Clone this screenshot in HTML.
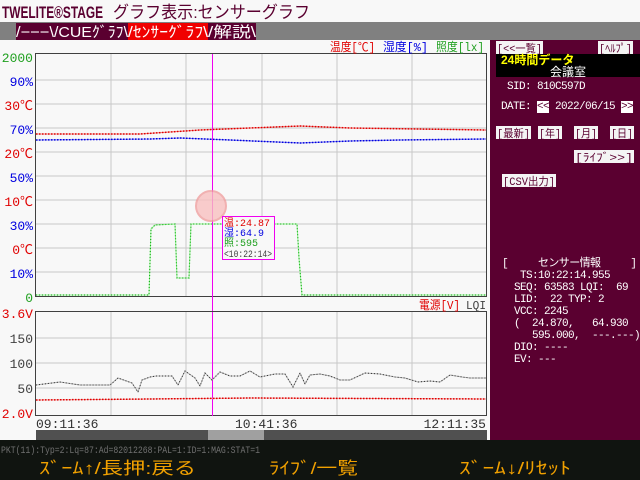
<!DOCTYPE html>
<html><head><meta charset="utf-8"><style>
*{margin:0;padding:0;box-sizing:border-box}
body{width:640px;height:480px;overflow:hidden;background:#f8f8f8;position:relative;font-family:"Liberation Mono","Noto Sans CJK JP",monospace;}
.a{position:absolute;white-space:pre;line-height:1}
</style></head><body>
<div class="a" style="left:0;top:22px;width:640px;height:18px;background:#808080"></div>
<div class="a" style="left:16px;top:23px;height:17px;width:112px;background:#5a0030"></div>
<div class="a" style="left:128px;top:23px;height:17px;width:80px;background:#f00000"></div>
<div class="a" style="left:208px;top:23px;height:17px;width:48px;background:#5a0030"></div>
<div class="a" style="left:490px;top:40px;width:150px;height:400px;background:#5a0030"></div>

<svg class="a" style="left:0;top:0" width="640" height="40" font-family="Liberation Sans,Noto Sans CJK JP,sans-serif">
<text x="2" y="18" font-size="17" font-weight="bold" fill="#5a0030" textLength="101" lengthAdjust="spacingAndGlyphs">TWELITE®STAGE</text>
<text x="113" y="18" font-size="17" fill="#5a0030" textLength="197" lengthAdjust="spacingAndGlyphs">グラフ表示:センサーグラフ</text>
<g fill="#fff" font-size="15">
<text x="16" y="37" textLength="38" lengthAdjust="spacingAndGlyphs">/−−−\</text>
<text x="54" y="37" textLength="74" lengthAdjust="spacingAndGlyphs">/CUEｸﾞﾗﾌ\</text>
<text x="128" y="37" textLength="80" lengthAdjust="spacingAndGlyphs">/ｾﾝｻｰｸﾞﾗﾌ\</text>
<text x="208" y="37" textLength="48" lengthAdjust="spacingAndGlyphs">/解説\</text>
</g>
</svg>

<svg class="a" style="left:0;top:0" width="490" height="440" font-family="Liberation Mono,Noto Sans CJK JP,monospace" font-size="12">
<rect x="35.5" y="53.5" width="451" height="243" fill="#f8f8f8" stroke="#404040"/>
<g stroke="#c8c8c8">
<path d="M36 80H486M36 104H486M36 128H486M36 152H486M36 176H486M36 200H486M36 224H486M36 248H486M36 272H486"/>
<path d="M111 54V296M186 54V296M262 54V296M337 54V296M412 54V296"/>
</g>
<g text-anchor="end" font-size="13">
<text x="33" y="62" fill="#20a020">2000</text>
<text x="33" y="86" fill="#0000e0">90%</text>
<text x="33" y="110" fill="#e00000">30℃</text>
<text x="33" y="134" fill="#0000e0">70%</text>
<text x="33" y="158" fill="#e00000">20℃</text>
<text x="33" y="182" fill="#0000e0">50%</text>
<text x="33" y="206" fill="#e00000">10℃</text>
<text x="33" y="230" fill="#0000e0">30%</text>
<text x="33" y="254" fill="#e00000">0℃</text>
<text x="33" y="278" fill="#0000e0">10%</text>
<text x="33" y="302" fill="#20a020">0</text>
</g>
<text x="330" y="51" font-size="12" fill="#e00000" textLength="45" lengthAdjust="spacingAndGlyphs">温度[℃]</text>
<text x="383" y="51" font-size="12" fill="#0000e0" textLength="45" lengthAdjust="spacingAndGlyphs">湿度[%]</text>
<text x="436" y="51" font-size="12" fill="#20a020" textLength="48" lengthAdjust="spacingAndGlyphs">照度[lx]</text>
<polyline fill="none" stroke="#f08080" points="36,134 140,134 200,130 250,128 300,126 350,128 486,130"/>
<polyline fill="none" stroke="#e00000" stroke-dasharray="1.5 1.5" stroke-width="1.5" points="36,134 140,134 200,130 250,128 300,126 350,128 486,130"/>
<polyline fill="none" stroke="#8080f0" points="36,140 150,139 180,138 230,140 300,143 350,141 400,140 486,139"/>
<polyline fill="none" stroke="#0000e0" stroke-dasharray="1.5 1.5" stroke-width="1.5" points="36,140 150,139 180,138 230,140 300,143 350,141 400,140 486,139"/>
<polyline fill="none" stroke="#90f090" points="36,295 149,295 151,229 155,225 175,224 177,278 189,278 191,224 297,224 299,258 302,295 486,295"/>
<polyline fill="none" stroke="#20b020" stroke-dasharray="1 2" stroke-width="1.2" points="36,295 149,295 151,229 155,225 175,224 177,278 189,278 191,224 297,224 299,258 302,295 486,295"/>
<line x1="212.5" y1="54" x2="212.5" y2="416" stroke="#f000f0"/>
<circle cx="211" cy="206" r="15" fill="#f8c0c0" stroke="#f0a0a0" stroke-width="2" opacity="0.8"/>
<rect x="222.5" y="216.5" width="52" height="43" fill="#f8f8f8" stroke="#f000f0"/>
<g font-size="10">
<text x="224" y="226" fill="#e00000">温:24.87</text>
<text x="224" y="236" fill="#0000e0">湿:64.9</text>
<text x="224" y="246" fill="#20a020">照:595</text>
<text x="224" y="257" fill="#404040" textLength="48" lengthAdjust="spacingAndGlyphs">&lt;10:22:14&gt;</text>
</g>
<rect x="35.5" y="311.5" width="451" height="104" fill="#f8f8f8" stroke="#404040"/>
<g stroke="#c8c8c8">
<path d="M36 338H486M36 363H486M36 388H486M111 312V415M186 312V415M262 312V415M337 312V415M412 312V415"/>
</g>
<line x1="212.5" y1="312" x2="212.5" y2="416" stroke="#f000f0"/>
<text x="419" y="309" font-size="12" fill="#e00000" textLength="41" lengthAdjust="spacingAndGlyphs">電源[V]</text>
<text x="466" y="309" font-size="12" fill="#404040" textLength="20" lengthAdjust="spacingAndGlyphs">LQI</text>
<g text-anchor="end" font-size="13">
<text x="33" y="318" fill="#e00000">3.6V</text>
<text x="33" y="343" fill="#404040">150</text>
<text x="33" y="368" fill="#404040">100</text>
<text x="33" y="393" fill="#404040">50</text>
<text x="33" y="418" fill="#e00000">2.0V</text>
</g>
<polyline fill="none" stroke="#b0b0b0" points="36,385 60,382 80,385 110,385 118,378 132,383 138,392 142,380 150,377 156,376 172,376 178,385 185,371 195,378 200,386 205,373 212,380 220,372 230,376 240,376 250,371 260,377 275,374 285,374 293,387 300,373 305,384 310,375 320,374 330,376 340,380 350,380 365,373 380,374 395,377 405,378 418,382 430,381 440,382 450,375 462,377 470,378 486,378"/>
<polyline fill="none" stroke="#303030" stroke-dasharray="1 2" points="36,385 60,382 80,385 110,385 118,378 132,383 138,392 142,380 150,377 156,376 172,376 178,385 185,371 195,378 200,386 205,373 212,380 220,372 230,376 240,376 250,371 260,377 275,374 285,374 293,387 300,373 305,384 310,375 320,374 330,376 340,380 350,380 365,373 380,374 395,377 405,378 418,382 430,381 440,382 450,375 462,377 470,378 486,378"/>
<polyline fill="none" stroke="#f09090" points="36,400 150,399 250,398 486,399"/>
<polyline fill="none" stroke="#e00000" stroke-dasharray="1.5 1.5" stroke-width="1.5" points="36,400 150,399 250,398 486,399"/>
<g font-size="13" fill="#303030">
<text x="36" y="428">09:11:36</text>
<text x="235" y="428">10:41:36</text>
<text x="486" y="428" text-anchor="end">12:11:35</text>
</g>
<rect x="36" y="430" width="451" height="10" fill="#505050"/>
<rect x="208" y="430" width="56" height="10" fill="#a0a0a0"/>
</svg>

<svg class="a" style="left:490px;top:40px" width="150" height="160" font-family="Liberation Mono,Noto Sans CJK JP,monospace" font-size="11">
<g fill="#f4f4f4">
<rect x="6" y="1" width="47" height="13"/>
<rect x="108" y="1" width="35" height="13"/>
<rect x="6" y="86" width="35" height="13"/>
<rect x="48" y="86" width="24" height="13"/>
<rect x="84" y="86" width="24" height="13"/>
<rect x="120" y="86" width="24" height="13"/>
<rect x="84" y="110" width="60" height="13"/>
<rect x="12" y="134" width="54" height="13"/>
</g>
<g fill="#5a0030">
<text x="7" y="12" textLength="45" lengthAdjust="spacingAndGlyphs">[&lt;&lt;一覧]</text>
<text x="109" y="12" textLength="33" lengthAdjust="spacingAndGlyphs">[ﾍﾙﾌﾟ]</text>
<text x="7" y="97" textLength="33" lengthAdjust="spacingAndGlyphs">[最新]</text>
<text x="49" y="97" textLength="22" lengthAdjust="spacingAndGlyphs">[年]</text>
<text x="85" y="97" textLength="22" lengthAdjust="spacingAndGlyphs">[月]</text>
<text x="121" y="97" textLength="22" lengthAdjust="spacingAndGlyphs">[日]</text>
<text x="85" y="121" textLength="58" lengthAdjust="spacingAndGlyphs">[ﾗｲﾌﾞ&gt;&gt;]</text>
<text x="13" y="145" textLength="52" lengthAdjust="spacingAndGlyphs">[CSV出力]</text>
</g>
</svg>
<div class="a" style="left:496px;top:54px;width:144px;height:23px;background:#000"></div>
<div class="a" style="left:501px;top:54px;font-size:12px;color:#ffff00;font-weight:bold;font-family:'Liberation Sans','Noto Sans CJK JP',sans-serif">24時間データ</div>
<div class="a" style="left:550px;top:66px;font-size:12px;color:#fff;font-family:'Liberation Sans','Noto Sans CJK JP',sans-serif">会議室</div>
<div class="a" style="left:507px;top:82px;font-size:11px;letter-spacing:-0.6px;color:#fff">SID: 810C597D</div>
<div class="a" style="left:501px;top:102px;font-size:11px;letter-spacing:-0.6px;color:#fff">DATE: <span style="background:#fff;color:#5a0030">&lt;&lt;</span> 2022/06/15 <span style="background:#fff;color:#5a0030">&gt;&gt;</span></div>
<div class="a" style="left:502px;top:258px;font-size:11px;letter-spacing:-0.6px;color:#fff;line-height:12px">[     センサー情報     ]
   TS:10:22:14.955
  SEQ: 63583 LQI:  69
  LID:  22 TYP: 2
  VCC: 2245
  (  24.870,   64.930
     595.000,  ---.---)
  DIO: ----
  EV: ---</div>

<div class="a" style="left:0;top:440px;width:640px;height:40px;background:#101410"></div>
<svg class="a" style="left:0;top:440px" width="640" height="40" font-family="Liberation Sans,Noto Sans CJK JP,sans-serif" font-size="17" fill="#f0a000">
<text x="1" y="13" font-size="10" fill="#707070" font-family="Liberation Mono,monospace" textLength="259" lengthAdjust="spacingAndGlyphs">PKT(11):Typ=2:Lq=87:Ad=82012268:PAL=1:ID=1:MAG:STAT=1</text>
<text x="39" y="34" textLength="157" lengthAdjust="spacingAndGlyphs">ｽﾞｰﾑ↑/長押:戻る</text>
<text x="269" y="34" textLength="89" lengthAdjust="spacingAndGlyphs">ﾗｲﾌﾞ/一覧</text>
<text x="459" y="34" textLength="112" lengthAdjust="spacingAndGlyphs">ｽﾞｰﾑ↓/ﾘｾｯﾄ</text>
</svg>
</body></html>
